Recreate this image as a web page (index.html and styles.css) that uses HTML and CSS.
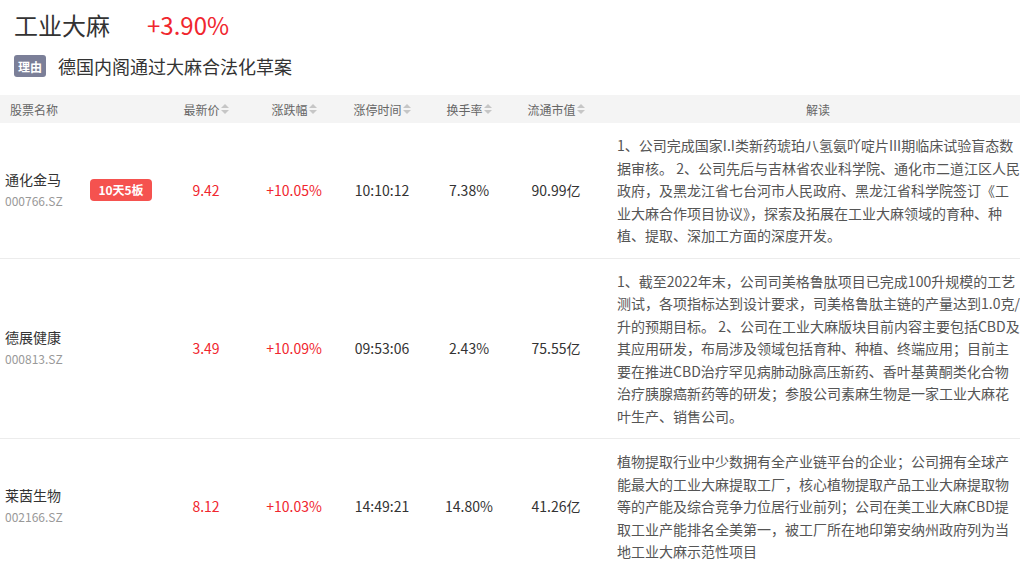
FILE: index.html
```html
<!DOCTYPE html>
<html lang="zh-CN">
<head>
<meta charset="utf-8">
<title>工业大麻</title>
<link rel="stylesheet" href="styles.css">
</head>
<body>
<div class="topic">
  <div class="topic-title">
    <span class="topic-name">工业大麻</span>
    <span class="topic-change">+3.90%</span>
  </div>
  <div class="topic-reason">
    <span class="reason-tag">理由</span>
    <span class="reason-text">德国内阁通过大麻合法化草案</span>
  </div>
</div>

<table class="stocks">
  <colgroup>
    <col class="c-name"><col class="c-tag"><col class="c-num"><col class="c-num"><col class="c-num"><col class="c-turn"><col class="c-num"><col class="c-desc">
  </colgroup>
  <thead>
    <tr>
      <th class="th-left" colspan="2">股票名称</th>
      <th><span class="sortable">最新价<i class="sort"></i></span></th>
      <th><span class="sortable">涨跌幅<i class="sort"></i></span></th>
      <th><span class="sortable">涨停时间<i class="sort"></i></span></th>
      <th><span class="sortable">换手率<i class="sort"></i></span></th>
      <th><span class="sortable">流通市值<i class="sort"></i></span></th>
      <th>解读</th>
    </tr>
  </thead>
  <tbody>
    <tr>
      <td class="name"><div class="stock-name">通化金马</div><div class="stock-code">000766.SZ</div></td>
      <td class="tag"><span class="board-tag">10天5板</span></td>
      <td class="up">9.42</td>
      <td class="up">+10.05%</td>
      <td>10:10:12</td>
      <td>7.38%</td>
      <td>90.99亿</td>
      <td class="desc">1、公司完成国家I.I类新药琥珀八氢氨吖啶片III期临床试验盲态数据审核。 2、公司先后与吉林省农业科学院、通化市二道江区人民政府，及黑龙江省七台河市人民政府、黑龙江省科学院签订《工业大麻合作项目协议》，探索及拓展在工业大麻领域的育种、种植、提取、深加工方面的深度开发。</td>
    </tr>
    <tr>
      <td class="name"><div class="stock-name">德展健康</div><div class="stock-code">000813.SZ</div></td>
      <td class="tag"></td>
      <td class="up">3.49</td>
      <td class="up">+10.09%</td>
      <td>09:53:06</td>
      <td>2.43%</td>
      <td>75.55亿</td>
      <td class="desc">1、截至2022年末，公司司美格鲁肽项目已完成100升规模的工艺测试，各项指标达到设计要求，司美格鲁肽主链的产量达到1.0克/升的预期目标。 2、公司在工业大麻版块目前内容主要包括CBD及其应用研发，布局涉及领域包括育种、种植、终端应用；目前主要在推进CBD治疗罕见病肺动脉高压新药、香叶基黄酮类化合物治疗胰腺癌新药等的研发；参股公司素麻生物是一家工业大麻花叶生产、销售公司。</td>
    </tr>
    <tr>
      <td class="name"><div class="stock-name">莱茵生物</div><div class="stock-code">002166.SZ</div></td>
      <td class="tag"></td>
      <td class="up">8.12</td>
      <td class="up">+10.03%</td>
      <td>14:49:21</td>
      <td>14.80%</td>
      <td>41.26亿</td>
      <td class="desc">植物提取行业中少数拥有全产业链平台的企业；公司拥有全球产能最大的工业大麻提取工厂，核心植物提取产品工业大麻提取物等的产能及综合竞争力位居行业前列；公司在美工业大麻CBD提取工业产能排名全美第一，被工厂所在地印第安纳州政府列为当地工业大麻示范性项目</td>
    </tr>
  </tbody>
</table>
</body>
</html>
```

FILE: styles.css
```css
html {
  overflow: hidden;
}
body {
  margin: 0;
  background: #fff;
  color: #333;
  font-family: "Noto Sans CJK SC", "Noto Sans", sans-serif;
}

.topic {
  padding: 8px 14px 0;
}
.topic-title {
  display: flex;
  align-items: center;
  height: 32px;
  font-size: 24px;
}
.topic-name {
  color: #333;
}
.topic-change {
  margin-left: 37px;
  color: #f0262e;
}
.topic-reason {
  display: flex;
  align-items: center;
  margin-top: 15px;
  height: 22px;
}
.reason-tag {
  display: inline-flex;
  align-items: center;
  justify-content: center;
  width: 32px;
  height: 22px;
  border-radius: 3px;
  background: #7b7f98;
  color: #fff;
  font-size: 12px;
  font-weight: bold;
}
.reason-text {
  margin-left: 12px;
  font-size: 18px;
  color: #333;
}

.stocks {
  margin-top: 18px;
  width: 1036px;
  table-layout: fixed;
  border-collapse: collapse;
}
.c-name { width: 80px; }
.c-tag { width: 82px; }
.c-num { width: 88px; }
.c-turn { width: 86px; }
.c-desc { width: 436px; }

.stocks th {
  height: 28px;
  padding: 0;
  background: #f4f4f4;
  color: #666;
  font-size: 12px;
  font-weight: normal;
  text-align: center;
}
.stocks th.th-left {
  text-align: left;
  padding-left: 10px;
}
.sortable {
  display: inline-flex;
  align-items: center;
}
.sort {
  position: relative;
  display: inline-block;
  width: 8px;
  height: 10px;
  margin-left: 1px;
}
.sort::before,
.sort::after {
  content: "";
  position: absolute;
  left: 0;
  border-left: 4px solid transparent;
  border-right: 4px solid transparent;
}
.sort::before {
  top: 0;
  border-bottom: 4px solid #c6c6c6;
}
.sort::after {
  bottom: 0;
  border-top: 4px solid #c6c6c6;
}

.stocks td {
  padding: 0;
  border-bottom: 1px solid #ececec;
  font-size: 14px;
  color: #333;
  text-align: center;
  vertical-align: middle;
}
.stocks td.up {
  color: #f0262e;
}
.stocks td.name {
  text-align: left;
  padding-left: 5px;
}
.stock-name {
  font-size: 14px;
  line-height: 21px;
  color: #333;
}
.stock-code {
  font-size: 12px;
  line-height: 21px;
  color: #999;
}
.board-tag {
  display: inline-block;
  height: 22px;
  line-height: 22px;
  padding: 0 8px;
  border-radius: 4px;
  background: #f5524f;
  color: #fff;
  font-size: 12px;
  font-weight: bold;
}
.stocks td.desc {
  padding: 11px 14px 11px 17px;
  text-align: left;
  line-height: 22.5px;
  color: #555;
  word-break: break-all;
}
```
